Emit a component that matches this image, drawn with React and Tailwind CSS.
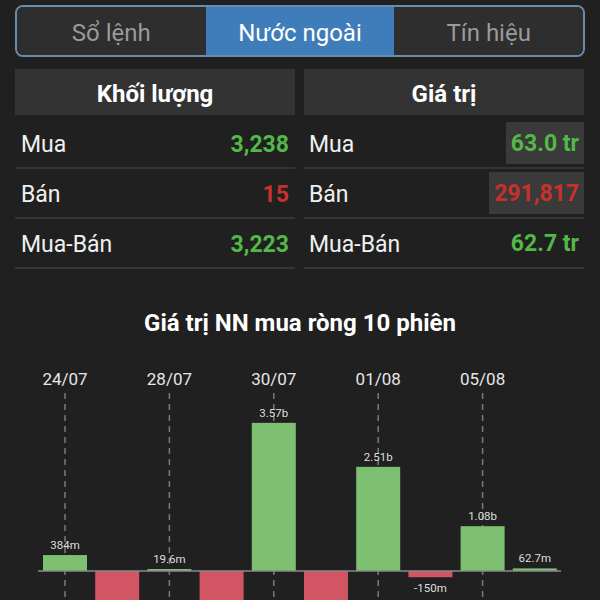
import React from 'react';

const tabs = ['Sổ lệnh', 'Nước ngoài', 'Tín hiệu'];

const volumeRows = [
  { label: 'Mua', value: '3,238', color: 'text-[#52b948]' },
  { label: 'Bán', value: '15', color: 'text-[#c8302c]' },
  { label: 'Mua-Bán', value: '3,223', color: 'text-[#52b948]' },
];

const valueRows = [
  { label: 'Mua', value: '63.0 tr', color: 'text-[#52b948]', boxed: true },
  { label: 'Bán', value: '291,817', color: 'text-[#c8302c]', boxed: true },
  { label: 'Mua-Bán', value: '62.7 tr', color: 'text-[#52b948]', boxed: false },
];

// net foreign buy value, in billions (deep negatives run off the bottom)
const sessions = [
  { date: '24/07', v: 0.384, label: '384m' },
  { v: -1.05 },
  { date: '28/07', v: 0.0196, label: '19.6m' },
  { v: -0.92 },
  { date: '30/07', v: 3.57, label: '3.57b' },
  { v: -1.3 },
  { date: '01/08', v: 2.51, label: '2.51b' },
  { v: -0.15, label: '-150m' },
  { date: '05/08', v: 1.08, label: '1.08b' },
  { v: 0.0627, label: '62.7m' },
];

const Chart = () => {
  const base = 231;
  const scale = 41.5;
  const step = 52.2;
  const barW = 44;

  return (
    <svg width="600" height="260" className="block" style={{ fontFamily: 'Roboto, sans-serif' }}>
      {sessions.map((s, i) => {
        const cx = 65 + step * i;
        if (!s.date) return null;
        return (
          <g key={'d' + i}>
            <text x={cx} y={45} textAnchor="middle" fontSize="17" fill="#e6e6e6">{s.date}</text>
            <line x1={cx} y1={53} x2={cx} y2={260} stroke="#7a7a7a" strokeWidth="1.5" strokeDasharray="6 5" />
          </g>
        );
      })}
      {sessions.map((s, i) => {
        const cx = 65 + step * i;
        const h = Math.max(Math.abs(s.v) * scale, 2);
        const pos = s.v >= 0;
        const y = pos ? base - h : base;
        return (
          <g key={'b' + i}>
            <rect x={cx - barW / 2} y={y} width={barW} height={h} fill={pos ? '#7ec071' : '#d25563'} />
            {s.label && (
              <text
                x={cx}
                y={pos ? y - 6 : y + h + 15}
                textAnchor="middle"
                fontSize="11.5"
                fill="#dedede"
              >
                {s.label}
              </text>
            )}
          </g>
        );
      })}
      <line x1="38" y1={base} x2="561" y2={base} stroke="#8a8a8a" strokeWidth="1.5" />
    </svg>
  );
};

const App = () => {
  return (
    <div className="w-[600px] h-[600px] overflow-hidden bg-[#202020] font-['Roboto',sans-serif]">
      <div className="px-[15px] pt-[5px]">
        <div className="grid grid-cols-3 h-[52px] rounded-lg border-2 border-[#6a8cab] overflow-hidden">
          {tabs.map((t, i) => (
            <div
              key={t}
              className={`flex items-center justify-center pt-[3px] text-[24px] ${
                i === 1 ? 'bg-[#3f7dba] text-white' : 'bg-[#2e2e2e] text-[#9a9a9a]'
              }`}
            >
              {t}
            </div>
          ))}
        </div>
      </div>

      <div className="grid grid-cols-2 gap-[9px] pl-[15px] pr-[16px] mt-[12px]">
        <div className="h-[46px] bg-[#333333] flex items-center justify-center pt-[3px] text-white text-[24px] font-bold">
          Khối lượng
        </div>
        <div className="h-[46px] bg-[#333333] flex items-center justify-center pt-[3px] text-white text-[24px] font-bold">
          Giá trị
        </div>
      </div>

      <div className="grid grid-cols-2 gap-[9px] pl-[15px] pr-[16px] pt-[4px]">
        <div>
          {volumeRows.map((r) => (
            <div key={r.label} className="h-[50px] border-b-2 border-[#353535] flex items-center justify-between pl-[6px] pr-[6px] pt-[4px]">
              <span className="text-[23px] text-[#f0f0f0]">{r.label}</span>
              <span className={`text-[23px] font-bold ${r.color}`}>{r.value}</span>
            </div>
          ))}
        </div>
        <div>
          {valueRows.map((r) => (
            <div key={r.label} className="h-[50px] border-b-2 border-[#353535] flex items-center justify-between pl-[5px]">
              <span className="text-[23px] text-[#f0f0f0] pt-[4px]">{r.label}</span>
              <span
                className={`h-[42px] flex items-center px-[5px] pt-[2px] text-[23px] font-bold ${r.color} ${
                  r.boxed ? 'bg-[#3a3a3a]' : ''
                }`}
              >
                {r.value}
              </span>
            </div>
          ))}
        </div>
      </div>

      <div className="mt-[40px] h-[28px] flex items-center justify-center text-white text-[24px] font-bold">
        Giá trị NN mua ròng 10 phiên
      </div>
      <div className="mt-[3px]">
        <Chart />
      </div>
    </div>
  );
};

export default App;
